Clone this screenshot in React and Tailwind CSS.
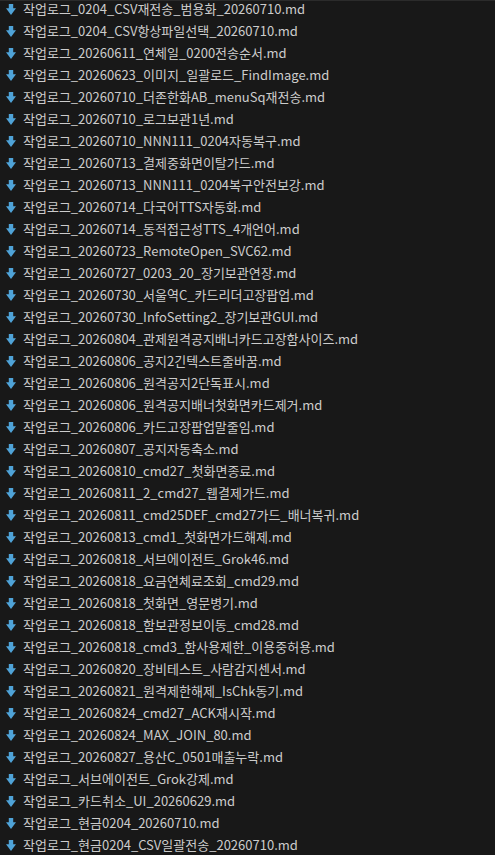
const files = [
  "작업로그_0204_CSV재전송_범용화_20260710.md",
  "작업로그_0204_CSV항상파일선택_20260710.md",
  "작업로그_20260611_연체일_0200전송순서.md",
  "작업로그_20260623_이미지_일괄로드_FindImage.md",
  "작업로그_20260710_더존한화AB_menuSq재전송.md",
  "작업로그_20260710_로그보관1년.md",
  "작업로그_20260710_NNN111_0204자동복구.md",
  "작업로그_20260713_결제중화면이탈가드.md",
  "작업로그_20260713_NNN111_0204복구안전보강.md",
  "작업로그_20260714_다국어TTS자동화.md",
  "작업로그_20260714_동적접근성TTS_4개언어.md",
  "작업로그_20260723_RemoteOpen_SVC62.md",
  "작업로그_20260727_0203_20_장기보관연장.md",
  "작업로그_20260730_서울역C_카드리더고장팝업.md",
  "작업로그_20260730_InfoSetting2_장기보관GUI.md",
  "작업로그_20260804_관제원격공지배너카드고장함사이즈.md",
  "작업로그_20260806_공지2긴텍스트줄바꿈.md",
  "작업로그_20260806_원격공지2단독표시.md",
  "작업로그_20260806_원격공지배너첫화면카드제거.md",
  "작업로그_20260806_카드고장팝업말줄임.md",
  "작업로그_20260807_공지자동축소.md",
  "작업로그_20260810_cmd27_첫화면종료.md",
  "작업로그_20260811_2_cmd27_웹결제가드.md",
  "작업로그_20260811_cmd25DEF_cmd27가드_배너복귀.md",
  "작업로그_20260813_cmd1_첫화면가드해제.md",
  "작업로그_20260818_서브에이전트_Grok46.md",
  "작업로그_20260818_요금연체료조회_cmd29.md",
  "작업로그_20260818_첫화면_영문병기.md",
  "작업로그_20260818_함보관정보이동_cmd28.md",
  "작업로그_20260818_cmd3_함사용제한_이용중허용.md",
  "작업로그_20260820_장비테스트_사람감지센서.md",
  "작업로그_20260821_원격제한해제_IsChk동기.md",
  "작업로그_20260824_cmd27_ACK재시작.md",
  "작업로그_20260824_MAX_JOIN_80.md",
  "작업로그_20260827_용산C_0501매출누락.md",
  "작업로그_서브에이전트_Grok강제.md",
  "작업로그_카드취소_UI_20260629.md",
  "작업로그_현금0204_20260710.md",
  "작업로그_현금0204_CSV일괄전송_20260710.md",
]

// markdown file icon (blue down arrow)
function MdIcon() {
  return (
    <svg width="10" height="11" viewBox="0 0 10 11" className="shrink-0 block">
      <path d="M2.8 0 H7.2 V4.2 H10 L5 11 L0 4.2 H2.8 Z" fill="#4fa3d8" />
    </svg>
  )
}

export default function App() {
  return (
    <div className="w-[495px] h-[855px] overflow-hidden bg-[#181818]">
      <div className="h-px bg-[#2b2b2b]" />
      <div className="-mt-[3px]">
        {files.map(name => (
          <div
            key={name}
            className="h-[22px] flex items-center pl-[6px] gap-[7px] text-[13px] text-[#cccccc] whitespace-nowrap"
            style={{ fontFamily: '"Noto Sans CJK KR", "Noto Sans", sans-serif' }}
          >
            <MdIcon />
            <span className="leading-[22px]">{name}</span>
          </div>
        ))}
      </div>
    </div>
  )
}
